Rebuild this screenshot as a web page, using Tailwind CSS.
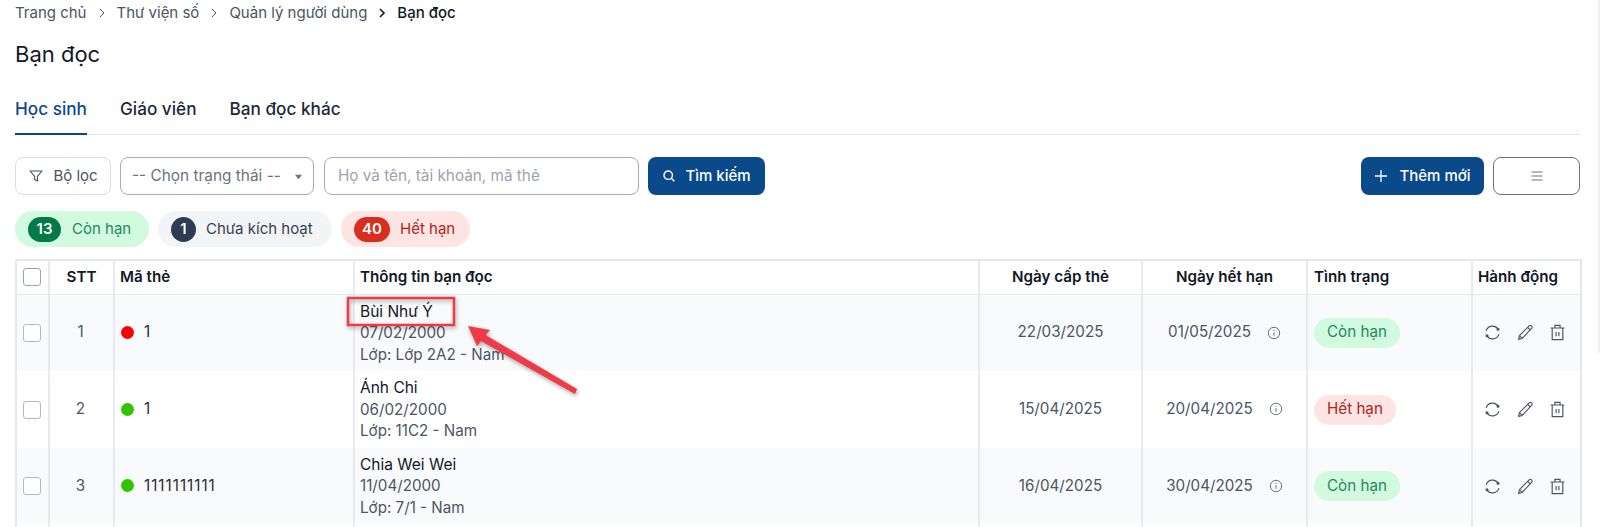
<!DOCTYPE html>
<html lang="vi">
<head>
<meta charset="UTF-8">
<title>Bạn đọc</title>
<script src="https://cdn.jsdelivr.net/npm/@tailwindcss/browser@4"></script>
</head>
<body class="bg-white font-['Inter','Noto_Sans',sans-serif] text-[#1f2937] overflow-hidden">
<div class="relative h-[527px] w-[1600px] overflow-hidden pl-[15px] pr-[20px]">

  <!-- Breadcrumb -->
  <nav class="flex h-[26px] items-center text-[15px] text-[#4b5563]">
    <span>Trang chủ</span>
    <svg class="mx-[9px] h-[12px] w-[12px]" viewBox="0 0 12 12" fill="none" stroke="currentColor" stroke-width="1"><path d="M4 2l4 4-4 4"/></svg>
    <span>Thư viện số</span>
    <svg class="mx-[9px] h-[12px] w-[12px]" viewBox="0 0 12 12" fill="none" stroke="currentColor" stroke-width="1"><path d="M4 2l4 4-4 4"/></svg>
    <span>Quản lý người dùng</span>
    <svg class="mx-[9px] h-[12px] w-[12px] text-[#111827]" viewBox="0 0 12 12" fill="none" stroke="currentColor" stroke-width="1.6"><path d="M4 2l4 4-4 4"/></svg>
    <span class="font-medium text-[#111827]">Bạn đọc</span>
  </nav>

  <h1 class="mt-[14px] text-[22px] leading-[28px] font-normal text-[#111827]">Bạn đọc</h1>

  <!-- Tabs -->
  <div class="mt-[29px] flex h-[38px] gap-[33px] border-b border-[#e5e7eb] text-[17.2px] leading-[24px] font-medium text-[#1f2937]">
    <div class="-mb-px h-[38px] border-b-2 border-[#0a4a8a] text-[#0b4a8b]">Học sinh</div>
    <div>Giáo viên</div>
    <div>Bạn đọc khác</div>
  </div>

  <!-- Toolbar -->
  <div class="mt-[22px] flex h-[38px] text-[15px]">
    <button class="flex w-[96px] items-center justify-center gap-[9px] rounded-lg border border-[#d9dde5] text-[#4b5563]">
      <svg class="h-[16px] w-[16px]" viewBox="0 0 16 16" fill="none" stroke="currentColor" stroke-width="1.1" stroke-linejoin="round"><path d="M2 3h12l-4.6 5.4V13l-2.8-1.6V8.4z"/></svg>
      Bộ lọc
    </button>
    <div class="ml-[9px] flex w-[194px] items-center justify-between rounded-lg border border-[#a8abb0] pr-[11px] pl-[11px] text-[15.4px] text-[#6b7280]">
      <span>-- Chọn trạng thái --</span>
      <svg class="h-[7px] w-[7px]" viewBox="0 0 8 8" fill="#6b7280"><path d="M0 2h8L4 7z"/></svg>
    </div>
    <div class="ml-[10px] flex w-[315px] items-center rounded-lg border border-[#a8abb0] pl-[13px] text-[15.3px] text-[#9ca3af]">Họ và tên, tài khoản, mã thẻ</div>
    <button class="ml-[9px] flex w-[117px] items-center justify-center gap-[9px] rounded-lg bg-[#0a4a8a] font-medium text-white">
      <svg class="h-[14px] w-[14px]" viewBox="0 0 14 14" fill="none" stroke="currentColor" stroke-width="1.4"><circle cx="6.2" cy="6.2" r="4.2"/><path d="M9.3 9.3L12.3 12.3"/></svg>
      Tìm kiếm
    </button>
    <button class="ml-auto flex w-[123px] items-center justify-center gap-[11px] rounded-lg bg-[#0a4a8a] font-medium text-white">
      <svg class="h-[14px] w-[14px]" viewBox="0 0 14 14" fill="none" stroke="currentColor" stroke-width="1.3"><path d="M7 1v12M1 7h12"/></svg>
      Thêm mới
    </button>
    <button class="ml-[9px] flex w-[87px] items-center justify-center rounded-lg border border-[#6b7280] text-[#6b7280]">
      <svg class="h-[14px] w-[14px]" viewBox="0 0 14 14" fill="none" stroke="currentColor" stroke-width="1"><path d="M1.5 3h11M1.5 7h11M1.5 11h11"/></svg>
    </button>
  </div>

  <!-- Status pills -->
  <div class="mt-[16px] flex h-[36px] gap-[9px] text-[15px]">
    <div class="flex w-[134px] items-center gap-[11px] rounded-full bg-[#d1fadf] pl-[13px] text-[#1d8a5c]">
      <span class="flex h-[25px] w-[33px] items-center justify-center rounded-full bg-[#027a48] font-semibold text-white">13</span>
      Còn hạn
    </div>
    <div class="flex w-[174px] items-center gap-[10px] rounded-full bg-[#f3f4f6] pl-[13px] text-[#374151]">
      <span class="flex h-[25px] w-[25px] items-center justify-center rounded-full bg-[#2d3b55] font-semibold text-white">1</span>
      Chưa kích hoạt
    </div>
    <div class="flex w-[129px] items-center gap-[10px] rounded-full bg-[#fee4e2] pl-[13px] text-[#b42318]">
      <span class="flex h-[25px] w-[36px] items-center justify-center rounded-full bg-[#d92d20] font-semibold text-white">40</span>
      Hết hạn
    </div>
  </div>

  <!-- Table -->
  <table class="mt-[12px] w-[1565px] table-fixed border-collapse border-2 border-[#e5e7eb] text-[15.2px] text-[#4b5563]">
    <colgroup>
      <col class="w-[33px]"><col class="w-[65px]"><col class="w-[240px]"><col class="w-[625px]"><col class="w-[163px]"><col class="w-[165px]"><col class="w-[165px]"><col class="w-[109px]">
    </colgroup>
    <thead class="text-[#111827]">
      <tr class="h-[34px] border-b border-[#e5e7eb] font-semibold">
        <th class="border-r-2 border-[#e9eaef] pl-[6px] text-left"><span class="block h-[18px] w-[18px] rounded-[3px] border border-[#9ca3af] bg-white"></span></th>
        <th class="border-r-2 border-[#e9eaef] font-semibold">STT</th>
        <th class="border-r-2 border-[#e9eaef] pl-[5px] text-left font-semibold">Mã thẻ</th>
        <th class="border-r-2 border-[#e9eaef] pl-[5px] text-left font-semibold">Thông tin bạn đọc</th>
        <th class="border-r-2 border-[#e9eaef] font-semibold">Ngày cấp thẻ</th>
        <th class="border-r-2 border-[#e9eaef] font-semibold">Ngày hết hạn</th>
        <th class="border-r-2 border-[#e9eaef] pl-[6px] text-left font-semibold">Tình trạng</th>
        <th class="pl-[5px] text-left font-semibold">Hành động</th>
      </tr>
    </thead>
    <tbody>
      <tr class="h-[77px] bg-[#f9fafb]">
        <td class="border-r-2 border-[#e9eaef] pl-[6px]"><span class="block h-[18px] w-[18px] rounded-[3px] border border-[#b4b8bf] bg-white"></span></td>
        <td class="border-r-2 border-[#e9eaef] pr-[2px] text-center">1</td>
        <td class="border-r-2 border-[#e9eaef] pl-[6px]"><div class="flex items-center gap-[10px] text-[#1f2937]"><span class="h-[13px] w-[13px] rounded-full bg-[#ff0000]"></span>1</div></td>
        <td class="border-r-2 border-[#e9eaef] pl-[5px] leading-[21.5px]"><div class="text-[15.5px] text-[#111827]">Bùi Như Ý</div><div>07/02/2000</div><div>Lớp: Lớp 2A2 - Nam</div></td>
        <td class="border-r-2 border-[#e9eaef] text-center">22/03/2025</td>
        <td class="border-r-2 border-[#e9eaef]"><div class="flex items-center justify-center gap-[16px]">01/05/2025<svg class="h-[14px] w-[14px]" viewBox="0 0 14 14" fill="none" stroke="#6b7280" stroke-width="1"><circle cx="7" cy="7" r="5.7"/><path d="M7 6.2v3.6M7 4v1"/></svg></div></td>
        <td class="border-r-2 border-[#e9eaef] pl-[6px]"><span class="inline-flex h-[30px] items-center rounded-full bg-[#d1fadf] px-[13px] text-[#1d8a5c]">Còn hạn</span></td>
        <td class="pr-[3px]">
          <div class="flex items-center justify-center gap-[15.5px] text-[#4b5563]">
            <svg class="h-[17px] w-[17px]" viewBox="0 0 16 16" fill="none" stroke="currentColor" stroke-width="1.1"><path d="M2 6.5A6.2 6.2 0 0 1 13.2 4.8M14 9.5A6.2 6.2 0 0 1 2.8 11.2"/><circle cx="13.2" cy="5" r="0.9" fill="currentColor"/><circle cx="2.8" cy="11" r="0.9" fill="currentColor"/></svg>
            <svg class="h-[17px] w-[17px]" viewBox="0 0 16 16" fill="none" stroke="currentColor" stroke-width="1.1" stroke-linejoin="round"><path d="M1.5 14.5l.8-3.6L11.4 1.8a1.6 1.6 0 0 1 2.3 2.3L4.9 13.6z"/><path d="M10 3.2l2.4 2.4M2.3 10.9l2.6 2.7"/></svg>
            <svg class="h-[17px] w-[17px]" viewBox="0 0 16 16" fill="none" stroke="currentColor" stroke-width="1.1"><path d="M1.5 3.8h13M5.6 3.8V1.3h4.8v2.5M3 3.8v10.9h10V3.8M6.7 7.5v4M9.3 7.5v4"/></svg>
          </div>
        </td>
      </tr>
      <tr class="h-[77px] bg-white">
        <td class="border-r-2 border-[#e9eaef] pl-[6px]"><span class="block h-[18px] w-[18px] rounded-[3px] border border-[#b4b8bf] bg-white"></span></td>
        <td class="border-r-2 border-[#e9eaef] pr-[2px] text-center">2</td>
        <td class="border-r-2 border-[#e9eaef] pl-[6px]"><div class="flex items-center gap-[10px] text-[#1f2937]"><span class="h-[13px] w-[13px] rounded-full bg-[#33c400]"></span>1</div></td>
        <td class="border-r-2 border-[#e9eaef] pl-[5px] leading-[21.5px]"><div class="text-[15.5px] text-[#111827]">Ánh Chi</div><div>06/02/2000</div><div>Lớp: 11C2 - Nam</div></td>
        <td class="border-r-2 border-[#e9eaef] text-center">15/04/2025</td>
        <td class="border-r-2 border-[#e9eaef]"><div class="flex items-center justify-center gap-[16px]">20/04/2025<svg class="h-[14px] w-[14px]" viewBox="0 0 14 14" fill="none" stroke="#6b7280" stroke-width="1"><circle cx="7" cy="7" r="5.7"/><path d="M7 6.2v3.6M7 4v1"/></svg></div></td>
        <td class="border-r-2 border-[#e9eaef] pl-[6px]"><span class="inline-flex h-[30px] items-center rounded-full bg-[#fee4e2] px-[13px] text-[#b42318]">Hết hạn</span></td>
        <td class="pr-[3px]">
          <div class="flex items-center justify-center gap-[15.5px] text-[#4b5563]">
            <svg class="h-[17px] w-[17px]" viewBox="0 0 16 16" fill="none" stroke="currentColor" stroke-width="1.1"><path d="M2 6.5A6.2 6.2 0 0 1 13.2 4.8M14 9.5A6.2 6.2 0 0 1 2.8 11.2"/><circle cx="13.2" cy="5" r="0.9" fill="currentColor"/><circle cx="2.8" cy="11" r="0.9" fill="currentColor"/></svg>
            <svg class="h-[17px] w-[17px]" viewBox="0 0 16 16" fill="none" stroke="currentColor" stroke-width="1.1" stroke-linejoin="round"><path d="M1.5 14.5l.8-3.6L11.4 1.8a1.6 1.6 0 0 1 2.3 2.3L4.9 13.6z"/><path d="M10 3.2l2.4 2.4M2.3 10.9l2.6 2.7"/></svg>
            <svg class="h-[17px] w-[17px]" viewBox="0 0 16 16" fill="none" stroke="currentColor" stroke-width="1.1"><path d="M1.5 3.8h13M5.6 3.8V1.3h4.8v2.5M3 3.8v10.9h10V3.8M6.7 7.5v4M9.3 7.5v4"/></svg>
          </div>
        </td>
      </tr>
      <tr class="h-[76px] bg-[#f9fafb]">
        <td class="border-r-2 border-[#e9eaef] pl-[6px]"><span class="block h-[18px] w-[18px] rounded-[3px] border border-[#b4b8bf] bg-white"></span></td>
        <td class="border-r-2 border-[#e9eaef] pr-[2px] text-center">3</td>
        <td class="border-r-2 border-[#e9eaef] pl-[6px]"><div class="flex items-center gap-[10px] text-[#1f2937]"><span class="h-[13px] w-[13px] rounded-full bg-[#33c400]"></span><span class="tracking-[1px]">1111111111</span></div></td>
        <td class="border-r-2 border-[#e9eaef] pl-[5px] leading-[21.5px]"><div class="text-[15.5px] text-[#111827]">Chia Wei Wei</div><div>11/04/2000</div><div>Lớp: 7/1 - Nam</div></td>
        <td class="border-r-2 border-[#e9eaef] text-center">16/04/2025</td>
        <td class="border-r-2 border-[#e9eaef]"><div class="flex items-center justify-center gap-[16px]">30/04/2025<svg class="h-[14px] w-[14px]" viewBox="0 0 14 14" fill="none" stroke="#6b7280" stroke-width="1"><circle cx="7" cy="7" r="5.7"/><path d="M7 6.2v3.6M7 4v1"/></svg></div></td>
        <td class="border-r-2 border-[#e9eaef] pl-[6px]"><span class="inline-flex h-[30px] items-center rounded-full bg-[#d1fadf] px-[13px] text-[#1d8a5c]">Còn hạn</span></td>
        <td class="pr-[3px]">
          <div class="flex items-center justify-center gap-[15.5px] text-[#4b5563]">
            <svg class="h-[17px] w-[17px]" viewBox="0 0 16 16" fill="none" stroke="currentColor" stroke-width="1.1"><path d="M2 6.5A6.2 6.2 0 0 1 13.2 4.8M14 9.5A6.2 6.2 0 0 1 2.8 11.2"/><circle cx="13.2" cy="5" r="0.9" fill="currentColor"/><circle cx="2.8" cy="11" r="0.9" fill="currentColor"/></svg>
            <svg class="h-[17px] w-[17px]" viewBox="0 0 16 16" fill="none" stroke="currentColor" stroke-width="1.1" stroke-linejoin="round"><path d="M1.5 14.5l.8-3.6L11.4 1.8a1.6 1.6 0 0 1 2.3 2.3L4.9 13.6z"/><path d="M10 3.2l2.4 2.4M2.3 10.9l2.6 2.7"/></svg>
            <svg class="h-[17px] w-[17px]" viewBox="0 0 16 16" fill="none" stroke="currentColor" stroke-width="1.1"><path d="M1.5 3.8h13M5.6 3.8V1.3h4.8v2.5M3 3.8v10.9h10V3.8M6.7 7.5v4M9.3 7.5v4"/></svg>
          </div>
        </td>
      </tr>
      <!-- next row, cut off by the bottom of the window -->
      <tr class="h-[77px] bg-white">
        <td class="border-r-2 border-[#e9eaef]"></td>
        <td class="border-r-2 border-[#e9eaef]"></td>
        <td class="border-r-2 border-[#e9eaef]"></td>
        <td class="border-r-2 border-[#e9eaef]"></td>
        <td class="border-r-2 border-[#e9eaef]"></td>
        <td class="border-r-2 border-[#e9eaef]"></td>
        <td class="border-r-2 border-[#e9eaef]"></td>
        <td></td>
      </tr>
    </tbody>
  </table>

  <!-- Annotation over the table -->
  <svg class="pointer-events-none absolute top-[290px] left-[340px] h-[115px] w-[250px] drop-shadow-[1px_2px_2px_rgba(0,0,0,0.35)]" viewBox="0 0 250 115" fill="none">
    <rect x="8" y="8" width="106" height="27" stroke="#ef3b45" stroke-width="2.5"/>
    <path d="M128 36L150 40L145.5 45L237 99L235 104L141 51L137 56Z" fill="#ef3b45"/>
  </svg>

  <!-- Page scrollbar sliver at the window edge -->
  <div class="absolute top-0 right-0 h-[353px] w-[2px] bg-[#f0f0f2]"></div>
</div>
</body>
</html>
